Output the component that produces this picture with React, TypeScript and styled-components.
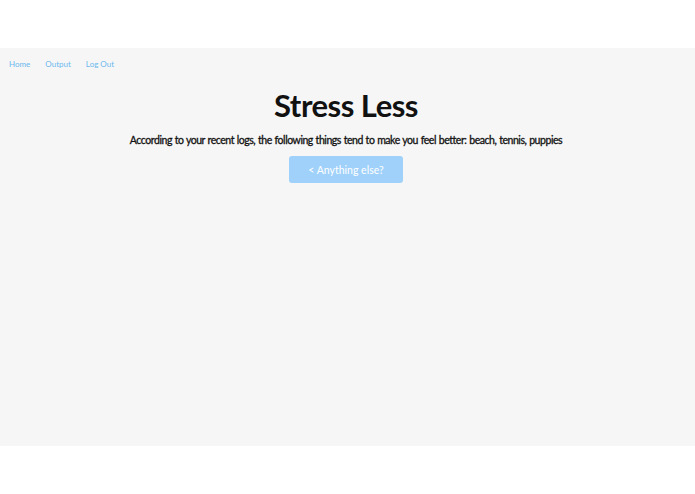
import React from 'react';
import styled, { createGlobalStyle } from 'styled-components';

const GlobalStyle = createGlobalStyle`
  html, body {
    margin: 0;
    padding: 0;
    background: #ffffff;
    font-family: Lato, 'Open Sans', sans-serif;
  }
`;

const Page = styled.div`
  padding: 48px 0;
  background: #ffffff;
`;

const Panel = styled.main`
  display: flex;
  flex-direction: column;
  height: 398px;
  background: #f6f6f6;
`;

const Nav = styled.nav`
  display: flex;
  gap: 15px;
  padding: 11px 9px 0;
  height: 15px;
`;

const NavLink = styled.a`
  color: #6bb8ee;
  font-size: 8px;
  text-decoration: none;
  cursor: pointer;
`;

const Content = styled.section`
  display: flex;
  flex-direction: column;
  align-items: center;
  padding-right: 3px;
`;

const Title = styled.h1`
  margin: 12px 0 0;
  font-size: 31px;
  font-weight: 700;
  letter-spacing: -0.5px;
  color: #111;
`;

const Summary = styled.p`
  margin: 10px 0 0;
  font-size: 10.5px;
  font-weight: 400;
  letter-spacing: -0.45px;
  word-spacing: 0.5px;
  color: #111;
  -webkit-text-stroke: 0.3px #111;
`;

const BackButton = styled.button`
  margin-top: 10px;
  width: 114px;
  height: 27px;
  border: none;
  border-radius: 3px;
  background: #9fd1fa;
  color: #ffffff;
  font-family: inherit;
  font-size: 10.5px;
  cursor: pointer;
`;

const links = ['Home', 'Output', 'Log Out'];
const things = ['beach', 'tennis', 'puppies'];

const App: React.FC = () => {
  return (
    <>
      <GlobalStyle />
      <Page>
        <Panel>
          <Nav>
            {links.map((l) => (
              <NavLink key={l}>{l}</NavLink>
            ))}
          </Nav>
          <Content>
            <Title>Stress Less</Title>
            <Summary>
              According to your recent logs, the following things tend to make
              you feel better: {things.join(', ')}
            </Summary>
            <BackButton>&lt; Anything else?</BackButton>
          </Content>
        </Panel>
      </Page>
    </>
  );
};

export default App;
